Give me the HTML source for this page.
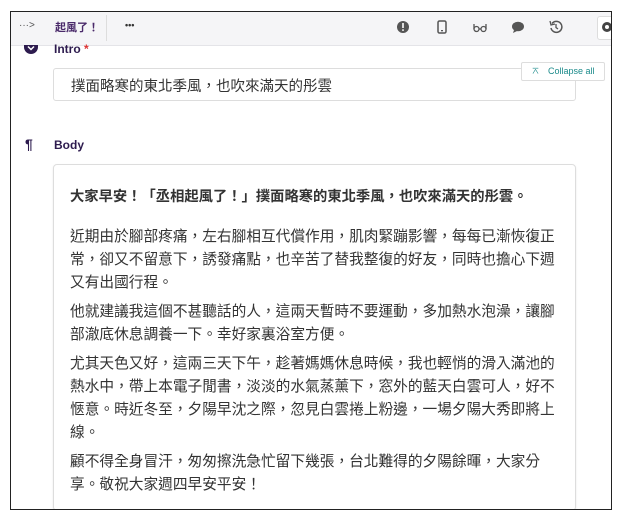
<!DOCTYPE html>
<html><head><meta charset="utf-8"><style>
body{margin:0;width:617px;height:520px;background:#fff;font-family:"Liberation Sans","Noto Sans CJK TC",sans-serif;position:relative;overflow:hidden}
.frame{position:absolute;left:10px;top:11px;width:600px;height:497px;border:1px solid #222;overflow:hidden;background:#fff}
.tb{position:absolute;left:0;top:0;width:600px;height:33px;background:#f5f5f7;border-bottom:1px solid #e4e4e8}
.abs{position:absolute}
.ic{position:absolute;top:8px;width:14px;height:14px}
.p{font-size:14.7px;color:#333;line-height:23px;margin:0 0 6px}
</style></head><body>
<div class="frame">
<div class="tb">
 <div class="abs" style="left:8px;top:8px;font-size:10px;color:#555">···&gt;</div>
 <div class="abs" style="left:44px;top:7px;font-size:11px;color:#4a2a6a;font-weight:bold">起風了！</div>
 <div class="abs" style="left:95px;top:3px;width:1px;height:26px;background:#ddd"></div>
 <div class="abs" style="left:114px;top:8px;font-size:9px;color:#333;font-weight:bold">•••</div>
 <svg class="ic" style="left:385px" viewBox="0 0 14 14"><circle cx="7" cy="7" r="6" fill="#555"/><rect x="6.2" y="3" width="1.6" height="5" fill="#fff"/><rect x="6.2" y="9.3" width="1.6" height="1.6" fill="#fff"/></svg>
 <svg class="ic" style="left:424px" viewBox="0 0 14 14"><rect x="3" y="1" width="8" height="12" rx="1.5" fill="none" stroke="#555" stroke-width="1.5"/><rect x="6" y="10" width="2" height="1.3" fill="#555"/></svg>
 <svg class="ic" style="left:462px" viewBox="0 0 14 14"><circle cx="3.5" cy="9" r="2.5" fill="none" stroke="#555" stroke-width="1.3"/><circle cx="10.5" cy="9" r="2.5" fill="none" stroke="#555" stroke-width="1.3"/><path d="M1 9V4M13 9V4M6 9h2" stroke="#555" stroke-width="1.3" fill="none"/></svg>
 <svg class="ic" style="left:500px" viewBox="0 0 14 14"><ellipse cx="7" cy="6.5" rx="6" ry="4.8" fill="#555"/><path d="M3 10l-1 3 4-2z" fill="#555"/></svg>
 <svg class="ic" style="left:538px" viewBox="0 0 14 14"><path d="M3 3.5A5.5 5.5 0 1 1 2 8" fill="none" stroke="#555" stroke-width="1.5"/><path d="M1 1l1 4 4-1" fill="none" stroke="#555" stroke-width="1.3"/><path d="M7 4v3.5l2 1.5" stroke="#555" stroke-width="1.3" fill="none"/></svg>
 <div class="abs" style="left:586px;top:4px;width:30px;height:22px;border:1px solid #ddd;border-radius:3px;background:#fff"></div>
 <svg class="abs" style="left:590px;top:9px" width="12" height="12" viewBox="0 0 12 12"><circle cx="6" cy="6" r="5" fill="#444"/><circle cx="6" cy="6" r="2" fill="#fff"/></svg>
</div>
<svg class="abs" style="left:13px;top:33px" width="14" height="9" viewBox="0 0 14 9"><path d="M0 0h14v2a7 7 0 0 1-14 0z" fill="#2d1b4e"/><path d="M4 1.5l3 3 3-3" stroke="#fff" stroke-width="1.5" fill="none"/></svg>
<div class="abs" style="left:43px;top:30px;font-size:12px;font-weight:bold;color:#2d1b4e">Intro <span style="color:#d33">*</span></div>
<div class="abs" style="left:42px;top:56px;width:521px;height:31px;border:1px solid #ddd;border-radius:3px;"></div>
<div class="abs" style="left:60px;top:63px;font-size:14.5px;color:#333">撲面略寒的東北季風，也吹來滿天的彤雲</div>
<div class="abs" style="left:510px;top:50px;width:82px;height:17px;border:1px solid #ddd;border-radius:2px;background:#fff;font-size:9px;color:#1a8a8a;line-height:17px"><span style="margin-left:9px">⌅</span><span style="margin-left:8px">Collapse all</span></div>
<div class="abs" style="left:14px;top:124px;font-size:14px;font-weight:bold;color:#2d1b4e">¶</div>
<div class="abs" style="left:43px;top:126px;font-size:12px;font-weight:bold;color:#2d1b4e">Body</div>
<div class="abs" style="left:42px;top:152px;width:521px;height:345px;border:1px solid #ddd;border-radius:4px;box-shadow:0 1px 2px rgba(0,0,0,.08)">
 <div style="position:absolute;left:16px;top:21px;width:490px">
  <p class="p" style="font-weight:bold;font-size:14.3px;margin-bottom:17px">大家早安！「丞相起風了！」撲面略寒的東北季風，也吹來滿天的彤雲。</p>
  <p class="p">近期由於腳部疼痛，左右腳相互代償作用，肌肉緊蹦影響，每每已漸恢復正常，卻又不留意下，誘發痛點，也辛苦了替我整復的好友，同時也擔心下週又有出國行程。</p>
  <p class="p">他就建議我這個不甚聽話的人，這兩天暫時不要運動，多加熱水泡澡，讓腳部澈底休息調養一下。幸好家裏浴室方便。</p>
  <p class="p">尤其天色又好，這兩三天下午，趁著媽媽休息時候，我也輕悄的滑入滿池的熱水中，帶上本電子閒書，淡淡的水氣蒸薰下，窓外的藍天白雲可人，好不愜意。時近冬至，夕陽早沈之際，忽見白雲捲上粉邊，一場夕陽大秀即將上線。</p>
  <p class="p">顧不得全身冒汗，匆匆擦洗急忙留下幾張，台北難得的夕陽餘暉，大家分享。敬祝大家週四早安平安！</p>
 </div>
</div>
</div>
</body></html>
